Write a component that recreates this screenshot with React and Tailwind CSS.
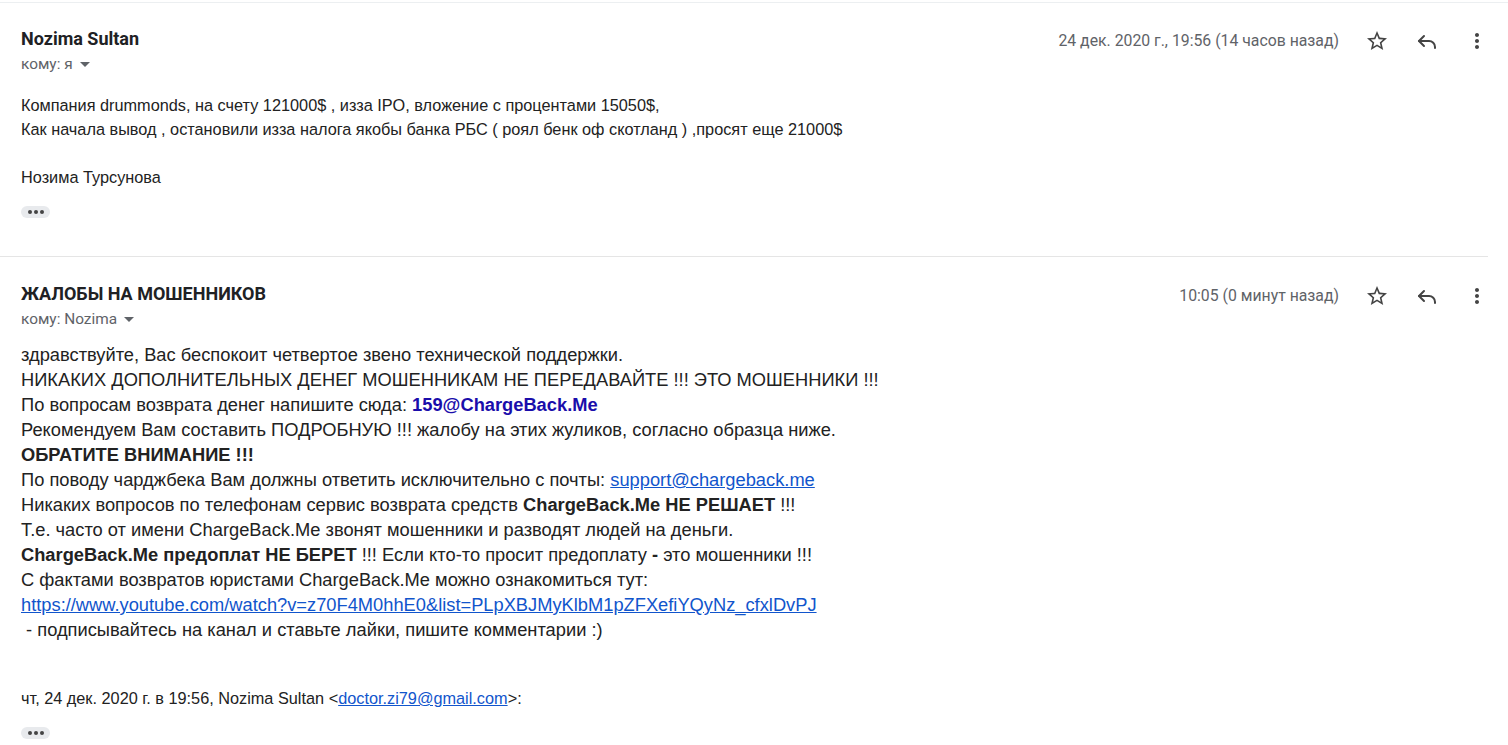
import React from 'react';

const Star = () => (
  <svg width="24" height="24" viewBox="0 0 24 24" fill="#444">
    <path d="M22 9.24l-7.19-.62L12 2 9.19 8.63 2 9.24l5.46 4.73L5.82 21 12 17.27 18.18 21l-1.63-7.03L22 9.24zM12 15.4l-3.76 2.27 1-4.28-3.32-2.88 4.38-.38L12 6.1l1.71 4.04 4.38.38-3.32 2.88 1 4.28L12 15.4z" />
  </svg>
);

const Reply = () => (
  <svg width="24" height="24" viewBox="0 0 24 24" fill="none" stroke="#444" strokeWidth="2" strokeLinecap="round" strokeLinejoin="round">
    <path d="M9 7l-5 5 5 5" />
    <path d="M4 12h10a6 6 0 0 1 6 6v1" />
  </svg>
);

const More = () => (
  <svg width="24" height="24" viewBox="0 0 24 24" fill="#444">
    <path d="M12 8c1.1 0 2-.9 2-2s-.9-2-2-2-2 .9-2 2 .9 2 2 2zm0 2c-1.1 0-2 .9-2 2s.9 2 2 2 2-.9 2-2-.9-2-2-2zm0 6c-1.1 0-2 .9-2 2s.9 2 2 2 2-.9 2-2-.9-2-2-2z" />
  </svg>
);

const Dots = () => (
  <div className="w-[29px] h-[12px] rounded-[6px] bg-[#e8eaed] flex items-center justify-center gap-[2px]">
    <span className="w-[4px] h-[4px] rounded-full bg-[#444]" />
    <span className="w-[4px] h-[4px] rounded-full bg-[#444]" />
    <span className="w-[4px] h-[4px] rounded-full bg-[#444]" />
  </div>
);

function Header({ name, to, date }) {
  return (
    <div className="flex items-start justify-between">
      <div>
        <div className="text-[18px] leading-[20px] font-bold text-[#202124]" style={{ fontFamily: 'Roboto, sans-serif' }}>{name}</div>
        <div className="flex items-center gap-[7px] text-[15.4px] leading-[20px] text-[#5f6368] mt-[5px]" style={{ fontFamily: 'Roboto, sans-serif' }}>
          <span>кому: {to}</span>
          <span className="w-0 h-0 border-l-[5px] border-r-[5px] border-t-[5px] border-l-transparent border-r-transparent border-t-[#5f6368]" />
        </div>
      </div>
      <div className="flex items-center" style={{ fontFamily: 'Roboto, sans-serif' }}>
        <span className="text-[15.8px] text-[#5f6368] mr-[13px]">{date}</span>
        <div className="w-[50px] flex justify-center"><Star /></div>
        <div className="w-[50px] flex justify-center"><Reply /></div>
        <div className="w-[50px] flex justify-center"><More /></div>
      </div>
    </div>
  );
}

export default function App() {
  const body = { fontFamily: '"Liberation Sans", Arial, sans-serif' };
  return (
    <div className="w-[1508px] h-[745px] bg-white overflow-hidden">
      <div className="h-[3px] border-b border-[#eceff1]" />

      <div className="pl-[21px] pr-[6px] pt-[26px]">
        <Header name="Nozima Sultan" to="я" date="24 дек. 2020 г., 19:56 (14 часов назад)" />
        <div className="mt-[19px] text-[16.3px] leading-[24px] text-[#222]" style={body}>
          <div>Компания drummonds, на счету 121000$ , изза IPO, вложение с процентами 15050$,</div>
          <div>Как начала вывод , остановили изза налога якобы банка РБС ( роял бенк оф скотланд ) ,просят еще 21000$</div>
          <div className="h-[24px]" />
          <div>Нозима Турсунова</div>
        </div>
        <div className="mt-[17px]"><Dots /></div>
      </div>

      <div className="mt-[38px] mr-[20px] border-b border-[#e5e5e5]" />

      <div className="pl-[21px] pr-[6px] pt-[27px]">
        <Header name="ЖАЛОБЫ НА МОШЕННИКОВ" to="Nozima" date="10:05 (0 минут назад)" />
        <div className="mt-[13px] text-[18.3px] leading-[25px] text-[#222]" style={body}>
          <div>здравствуйте, Вас беспокоит четвертое звено технической поддержки.</div>
          <div>НИКАКИХ ДОПОЛНИТЕЛЬНЫХ ДЕНЕГ МОШЕННИКАМ НЕ ПЕРЕДАВАЙТЕ !!! ЭТО МОШЕННИКИ !!!</div>
          <div>По вопросам возврата денег напишите сюда: <b className="text-[#1a0dab]">159@ChargeBack.Me</b></div>
          <div>Рекомендуем Вам составить ПОДРОБНУЮ !!! жалобу на этих жуликов, согласно образца ниже.</div>
          <div className="font-bold">ОБРАТИТЕ ВНИМАНИЕ !!!</div>
          <div>По поводу чарджбека Вам должны ответить исключительно с почты: <span className="text-[#1155cc] underline">support@chargeback.me</span></div>
          <div>Никаких вопросов по телефонам сервис возврата средств <b>ChargeBack.Me НЕ РЕШАЕТ</b> !!!</div>
          <div>Т.е. часто от имени ChargeBack.Me звонят мошенники и разводят людей на деньги.</div>
          <div><b>ChargeBack.Me предоплат НЕ БЕРЕТ</b> !!! Если кто-то просит предоплату <b>-</b> это мошенники !!!</div>
          <div>С фактами возвратов юристами ChargeBack.Me можно ознакомиться тут:</div>
          <div><span className="text-[#1155cc] underline">https://www.youtube.com/watch?v=z70F4M0hhE0&amp;list=PLpXBJMyKlbM1pZFXefiYQyNz_cfxlDvPJ</span></div>
          <div>&nbsp;- подписывайтесь на канал и ставьте лайки, пишите комментарии :)</div>
        </div>
        <div className="mt-[46px] text-[16.3px] leading-[20px] text-[#222]" style={body}>
          чт, 24 дек. 2020 г. в 19:56, Nozima Sultan &lt;<span className="text-[#1155cc] underline">doctor.zi79@gmail.com</span>&gt;:
        </div>
        <div className="mt-[19px]"><Dots /></div>
      </div>
    </div>
  );
}
